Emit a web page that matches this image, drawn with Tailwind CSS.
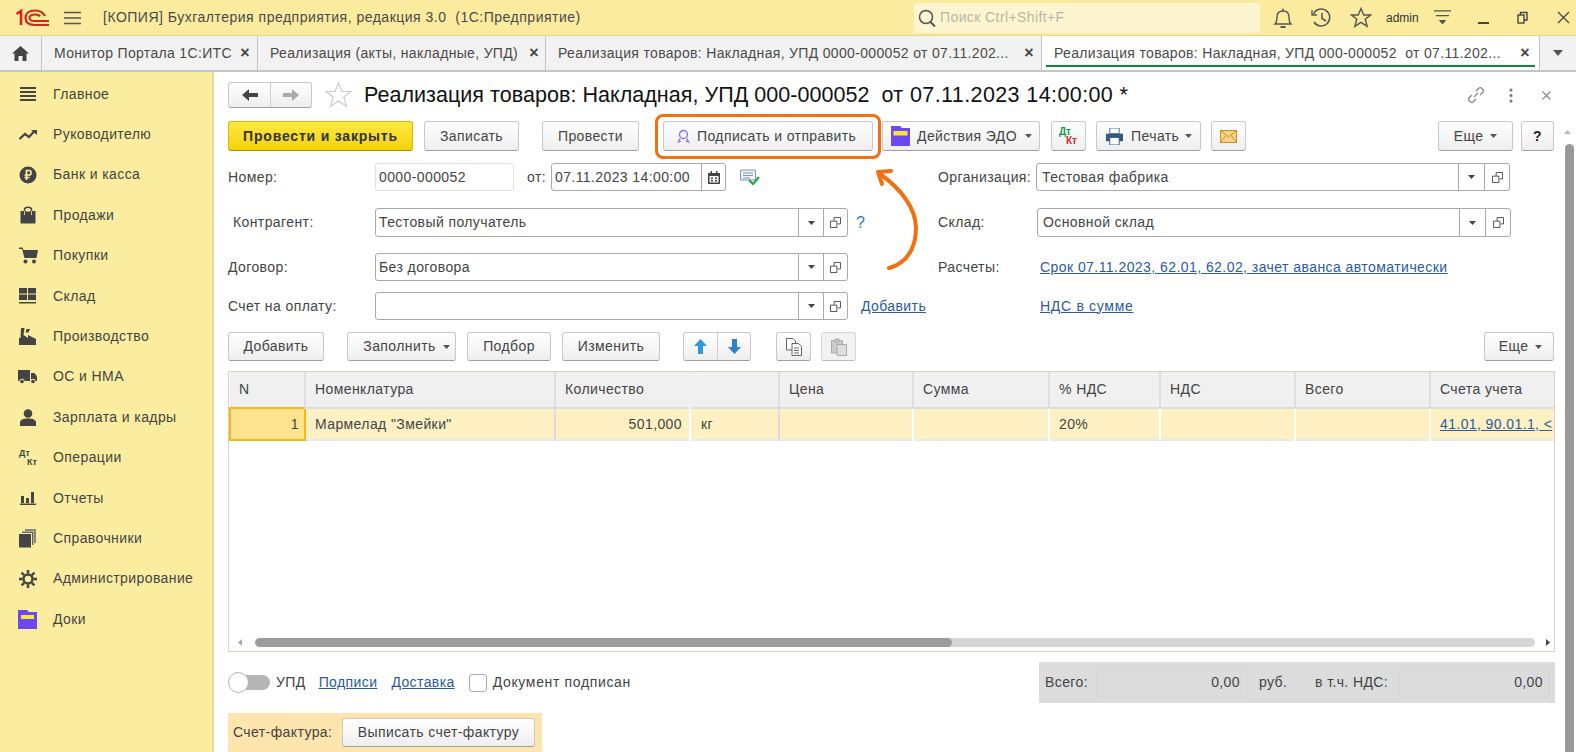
<!DOCTYPE html>
<html lang="ru">
<head>
    <meta charset="UTF-8">
    <title>Реализация товаров</title>
    <script src="https://cdn.jsdelivr.net/npm/@tailwindcss/browser@4"></script>
</head>
<body class="w-[1576px] h-[752px] overflow-hidden bg-white flex flex-col font-['Liberation_Sans',Arial,sans-serif] text-[14px] tracking-[0.4px] text-[#444]">

    <!-- title bar -->
    <header class="h-[36px] shrink-0 flex items-center bg-[#fbeb9f] border-b border-[#e2d68e]">
        <svg class="ml-[15px] w-[35px] h-[18px]" viewBox="0 0 35 18" fill="none" stroke="#d5261c">
            <path d="M1.5 5 L6 2 V16" stroke-width="2.6"/>
            <path d="M30 7 C28 3 24 1.5 20 1.5 C14 1.5 10.500 4.500 10.500 9 C10.500 13.500 14 16 20 16 H34" stroke-width="2.2"/>
            <path d="M25 7.500 C24 6 22 5.500 20 5.500 C16.500 5.500 14.500 7 14.500 9 C14.500 11 16.500 12 20 12 H34" stroke-width="2"/>
        </svg>
        <svg class="ml-[14px] w-[17px] h-[14px]" viewBox="0 0 17 14" stroke="#555" stroke-width="1.300"><path d="M0 1.500H17M0 7H17M0 12.500H17"/></svg>
        <div class="ml-[22px] w-[811px] tracking-[0.5px] text-[#4a4a4a]">[КОПИЯ] Бухгалтерия предприятия, редакция 3.0&nbsp; (1С:Предприятие)</div>
        <div class="w-[346px] h-[30px] rounded-[3px] bg-[#fdf5cf] flex items-center pl-[3px]">
            <svg class="w-[20px] h-[20px]" viewBox="0 0 20 20" fill="none" stroke="#555" stroke-width="1.500"><circle cx="9" cy="9" r="6.500"/><path d="M13.500 14L18 18.500" stroke-width="2"/></svg>
            <input class="ml-[3px] w-[300px] bg-transparent outline-none placeholder:text-[#b9b6a6]" placeholder="Поиск Ctrl+Shift+F">
        </div>
        <svg class="ml-[13px] w-[20px] h-[22px]" viewBox="0 0 20 22" fill="none" stroke="#555" stroke-width="1.400"><path d="M2 17 C4 15 4 12 4 10 C4 6 6.500 4 10 4 C13.500 4 16 6 16 10 C16 12 16 15 18 17 Z"/><path d="M10 1.500V4"/><path d="M7.500 20H12.500" stroke-width="2"/></svg>
        <svg class="ml-[18px] w-[21px] h-[22px]" viewBox="0 0 21 22" fill="none" stroke="#555" stroke-width="1.500"><path d="M2.500 7 A8.500 8.500 0 1 1 3 15"/><path d="M1 3V8H6" stroke-width="1.300"/><path d="M11 6V11.500L15 14"/></svg>
        <svg class="ml-[18px] w-[22px] h-[21px]" viewBox="0 0 22 21" fill="none" stroke="#555" stroke-width="1.400"><path d="M11 1.500L13.800 8H20.500L15.200 12.300L17.200 19.300L11 15.300L4.800 19.300L6.800 12.300L1.500 8H8.200Z"/></svg>
        <span class="ml-[14px] text-[12px] tracking-normal text-[#333]">admin</span>
        <svg class="ml-[15px] w-[17px] h-[18px]" viewBox="0 0 18 18" stroke="#555" stroke-width="1.400" fill="#555"><path d="M0 1.500H18M2 6.500H16"/><path d="M5 11H13L9 16Z" stroke="none"/></svg>
        <svg class="ml-[27px] w-[11px] h-[4px] mt-[10px]" viewBox="0 0 11 4" stroke="#444" stroke-width="2"><path d="M0 2H11"/></svg>
        <svg class="ml-[28px] w-[11px] h-[13px]" viewBox="0 0 11 13" fill="none" stroke="#444" stroke-width="1.400"><rect x="1" y="4" width="6" height="8"/><path d="M3.500 4V1.500H10V9H7"/></svg>
        <svg class="ml-[29px] w-[13px] h-[13px]" viewBox="0 0 13 13" stroke="#444" stroke-width="1.200"><path d="M1 1L12 12M12 1L1 12"/></svg>
    </header>

    <!-- open tabs -->
    <nav class="h-[36px] shrink-0 flex bg-[#f2f2f2] border-b-2 border-[#c4c4c4] text-[#4a4a4a] tracking-[0.33px]">
        <div class="w-[42px] flex items-center justify-center border-r border-[#c4c4c4]">
            <svg class="w-[17px] h-[15px]" viewBox="0 0 17 15" fill="#444"><path d="M8.500 0L0 7.500H2.500V15H6.500V10H10.500V15H14.500V7.500H17Z"/></svg>
        </div>
        <div class="w-[216px] pl-[12px] flex items-center justify-between pr-[7px] border-r border-[#c4c4c4]">
            <span>Монитор Портала 1С:ИТС</span><span class="text-[#444] text-[16px] font-bold leading-none">×</span>
        </div>
        <div class="w-[288px] pl-[12px] flex items-center justify-between pr-[6px] border-r border-[#c4c4c4]">
            <span>Реализация (акты, накладные, УПД)</span><span class="text-[#444] text-[16px] font-bold leading-none">×</span>
        </div>
        <div class="w-[496px] pl-[12px] flex items-center justify-between pr-[7px] border-r border-[#c4c4c4]">
            <span class="whitespace-pre">Реализация товаров: Накладная, УПД 0000-000052 от 07.11.202...</span><span class="text-[#444] text-[16px] font-bold leading-none">×</span>
        </div>
        <div class="w-[498px] relative bg-white pl-[12px] flex items-center justify-between pr-[9px] border-r border-[#c4c4c4]">
            <span class="whitespace-pre">Реализация товаров: Накладная, УПД 000-000052  от 07.11.202...</span><span class="text-[#444] text-[16px] font-bold leading-none">×</span>
            <div class="absolute left-[4px] right-[4px] bottom-[3px] h-[2px] bg-[#0b8a3e]"></div>
        </div>
        <div class="flex-1 flex items-center justify-center">
            <svg class="w-[10px] h-[6px]" viewBox="0 0 10 6" fill="#555"><path d="M0 0H10L5 6Z"/></svg>
        </div>
    </nav>

    <div class="flex-1 flex min-h-0">
        <!-- sections panel -->
        <aside class="w-[214px] shrink-0 bg-[#fbeda0] border-r-2 border-[#e6dca0] pt-[2px] text-[#444]">
            <a class="h-[40.400px] flex items-center">
                <svg class="ml-[19px] w-[18px] h-[16px]" viewBox="0 0 18 16" stroke="#444" stroke-width="1.800"><path d="M1 2H17M1 6H17M1 10H17M1 14H17"/></svg>
                <span class="ml-[16px]">Главное</span>
            </a>
            <a class="h-[40.400px] flex items-center">
                <svg class="ml-[19px] w-[18px] h-[16px]" viewBox="0 0 18 16" fill="none" stroke="#444" stroke-width="2.200"><path d="M0.500 12L6 7L10 10L15 4.500"/><path d="M12 3H18V8" stroke="none" fill="#444"/></svg>
                <span class="ml-[16px]">Руководителю</span>
            </a>
            <a class="h-[40.400px] flex items-center">
                <svg class="ml-[19px] w-[18px] h-[18px]" viewBox="0 0 18 18"><circle cx="9" cy="9" r="8.500" fill="#444"/><path d="M7.500 14V4.500H10.500C12.500 4.500 12.500 9 10.500 9H5.500M5.500 11.500H10.500" fill="none" stroke="#fbeda0" stroke-width="1.700"/></svg>
                <span class="ml-[16px]">Банк и касса</span>
            </a>
            <a class="h-[40.400px] flex items-center">
                <svg class="ml-[20px] w-[16px] h-[18px]" viewBox="0 0 16 18"><path d="M0.500 5H15.500V17.500H0.500Z" fill="#444"/><path d="M4.500 9V3.500C4.500 0.500 11.500 0.500 11.500 3.500V9" fill="none" stroke="#444" stroke-width="1.500"/><path d="M6 5.500V3.800C6 2.300 10 2.300 10 3.800V5.500Z" fill="#fbeda0"/><path d="M4.500 5V9M11.500 5V9" stroke="#fbeda0" stroke-width="0.800"/></svg>
                <span class="ml-[17px]">Продажи</span>
            </a>
            <a class="h-[40.400px] flex items-center">
                <svg class="ml-[19px] w-[19px] h-[17px]" viewBox="0 0 19 17" fill="#444"><path d="M0 0.500H3.500L4.500 3H19L17.500 11H5.500L3 2H0Z"/><circle cx="6.500" cy="14.500" r="2"/><circle cx="15" cy="14.500" r="2"/></svg>
                <span class="ml-[15px]">Покупки</span>
            </a>
            <a class="h-[40.400px] flex items-center">
                <svg class="ml-[19px] w-[17px] h-[16px]" viewBox="0 0 17 16" fill="#444"><path d="M0 0H8V5.500H0ZM9 0H17V5.500H9ZM0 6.500H8V12H0ZM9 6.500H17V12H9ZM0 14H17V15.500H0Z"/></svg>
                <span class="ml-[17px]">Склад</span>
            </a>
            <a class="h-[40.400px] flex items-center">
                <svg class="ml-[19px] w-[17px] h-[17px]" viewBox="0 0 17 17" fill="#444"><path d="M2 0H5.500L4.500 7L9 10V7L17 11V17H0V10H1.500Z"/><path d="M7.500 1H11L9.500 4.500H6.500Z"/></svg>
                <span class="ml-[17px]">Производство</span>
            </a>
            <a class="h-[40.400px] flex items-center">
                <svg class="ml-[18px] w-[19px] h-[15px]" viewBox="0 0 19 15" fill="#444"><path d="M0 1H12V12H0ZM13 4H16.500L19 7.500V12H13Z"/><circle cx="4" cy="12.500" r="2.300" stroke="#fbeda0"/><circle cx="15" cy="12.500" r="2.300" stroke="#fbeda0"/></svg>
                <span class="ml-[16px]">ОС и НМА</span>
            </a>
            <a class="h-[40.400px] flex items-center">
                <svg class="ml-[20px] w-[16px] h-[17px]" viewBox="0 0 16 17" fill="#444"><circle cx="8" cy="4.500" r="4.300"/><path d="M0 17V13.500C0 11 3 9.500 8 9.500C13 9.500 16 11 16 13.500V17Z"/></svg>
                <span class="ml-[17px]">Зарплата и кадры</span>
            </a>
            <a class="h-[40.400px] flex items-center">
                <span class="ml-[19px] w-[18px] h-[18px] relative block text-[9px] tracking-normal font-bold leading-none"><span class="absolute left-0 top-0">Дт</span><span class="absolute right-0 bottom-0">Кт</span></span>
                <span class="ml-[16px]">Операции</span>
            </a>
            <a class="h-[40.400px] flex items-center">
                <svg class="ml-[20px] w-[16px] h-[14px]" viewBox="0 0 16 14" fill="#444"><path d="M1 5H4V12H1ZM6 7H9V12H6ZM11 1H14V12H11ZM0 12.500H16V14H0Z"/></svg>
                <span class="ml-[17px]">Отчеты</span>
            </a>
            <a class="h-[40.400px] flex items-center">
                <svg class="ml-[19px] w-[17px] h-[19px]" viewBox="0 0 17 19"><path d="M6 0H17V14H15V2H6Z" fill="#8a8a7a"/><path d="M3 2.500H14.500V16H13V4H3Z" fill="#666"/><path d="M0 5H12V18.500H0Z" fill="#444"/></svg>
                <span class="ml-[17px]">Справочники</span>
            </a>
            <a class="h-[40.400px] flex items-center">
                <svg class="ml-[19px] w-[18px] h-[18px]" viewBox="0 0 18 18" fill="none" stroke="#444"><circle cx="9" cy="9" r="4.500" stroke-width="2.500"/><path d="M9 0V3.500M9 14.500V18M0 9H3.500M14.500 9H18M2.600 2.600L5.100 5.100M12.900 12.900L15.400 15.400M2.600 15.400L5.100 12.900M12.900 5.100L15.400 2.600" stroke-width="2.500"/></svg>
                <span class="ml-[16px]">Администрирование</span>
            </a>
            <a class="h-[40.400px] flex items-center">
                <svg class="ml-[18px] w-[19px] h-[19px]" viewBox="0 0 19 19"><path d="M0 0H9L11 2H19V19H0Z" fill="#6b48f0"/><path d="M3 5H16V9H3Z" fill="#fde23a"/></svg>
                <span class="ml-[16px]">Доки</span>
            </a>
        </aside>

        <!-- document form -->
        <main class="flex-1 min-w-0 pl-[14px] flex flex-col">
            <div class="mt-[10px] h-[26px] flex items-center shrink-0">
                <div class="w-[84px] h-full flex rounded-[3px] border border-[#c8c8c8] border-b-[#a0a0a0] bg-linear-to-b from-white to-[#eeeeee]">
                    <div class="w-[42px] border-r border-[#d0d0d0] flex items-center justify-center">
                        <svg class="w-[16px] h-[12px]" viewBox="0 0 16 12" fill="#444"><path d="M0 6L7 0V4H16V8H7V12Z"/></svg>
                    </div>
                    <div class="flex-1 flex items-center justify-center">
                        <svg class="w-[16px] h-[12px]" viewBox="0 0 16 12" fill="#aaa"><path d="M16 6L9 0V4H0V8H9V12Z"/></svg>
                    </div>
                </div>
                <svg class="ml-[13px] w-[27px] h-[26px]" viewBox="0 0 27 26" fill="none" stroke="#ccc" stroke-width="1.200"><path d="M13.500 1L17 9.500H26L18.800 15L21.500 24.500L13.500 19L5.500 24.500L8.200 15L1 9.500H10Z"/></svg>
                <h1 class="ml-[12px] text-[21.500px] tracking-[0.04px] text-[#111] whitespace-pre">Реализация товаров: Накладная, УПД 000-000052  <span class="tracking-[0.4px]">от 07.11.2023 14:00:00 *</span></h1>
                <div class="ml-auto flex items-center mr-[4px]">
                    <svg class="w-[20px] h-[20px]" viewBox="0 0 20 20" fill="none" stroke="#888" stroke-width="1.300"><path d="M8 12L12 8"/><path d="M10 6L13 3C15 1.500 18.500 5 17 7L14 10"/><path d="M10 14L7 17C5 18.500 1.500 15 3 13L6 10"/></svg>
                    <svg class="ml-[23px] w-[4px] h-[15px]" viewBox="0 0 4 15" fill="#777"><circle cx="2" cy="2" r="1.500"/><circle cx="2" cy="7.500" r="1.500"/><circle cx="2" cy="13" r="1.500"/></svg>
                    <svg class="ml-[29px] w-[9px] h-[9px]" viewBox="0 0 9 9" stroke="#888" stroke-width="1.100"><path d="M0.500 0.500L8.500 8.500M8.500 0.500L0.500 8.500"/></svg>
                </div>
            </div>

            <div class="mt-[13px] h-[30px] flex shrink-0">
                <button class="w-[185px] rounded-[3px] border border-[#d8b800] border-b-[#a89000] bg-linear-to-b from-[#ffe93c] to-[#f3d200] font-bold tracking-[0.8px] text-[#333]">Провести и закрыть</button>
                <button class="ml-[11px] w-[95px] rounded-[3px] border border-[#c8c8c8] border-b-[#a0a0a0] bg-linear-to-b from-white to-[#eeeeee]">Записать</button>
                <button class="ml-[23px] w-[97px] rounded-[3px] border border-[#c8c8c8] border-b-[#a0a0a0] bg-linear-to-b from-white to-[#eeeeee]">Провести</button>
                <button class="relative ml-[24px] w-[210px] rounded-[3px] border border-[#c8c8c8] border-b-[#a0a0a0] bg-linear-to-b from-white to-[#eeeeee] flex items-center pl-[13px]">
                    <svg class="w-[13px] h-[14px]" viewBox="0 0 13 14" fill="none" stroke="#8470f0" stroke-width="1.300"><circle cx="6.500" cy="5.500" r="4"/><path d="M3 9.500L1.500 13L4 12M10 9.500L11.500 13L9 12"/></svg>
                    <span class="ml-[7px]">Подписать и отправить</span>
                    <span class="absolute left-[-9px] right-[-9px] top-[-8px] bottom-[-9px] rounded-[8px] border-[3px] border-[#f2700f]"></span>
                </button>
                <button class="ml-[9px] w-[158px] rounded-[3px] border border-[#c8c8c8] border-b-[#a0a0a0] bg-linear-to-b from-white to-[#eeeeee] flex items-center pl-[8px]">
                    <svg class="w-[19px] h-[20px]" viewBox="0 0 19 20"><path d="M0 0H9L11 2H19V20H0Z" fill="#6b48f0"/><path d="M2.500 5H16.500V9.500H2.500Z" fill="#fde23a"/></svg>
                    <span class="ml-[7px]">Действия ЭДО</span>
                    <svg class="ml-[8px] w-[7px] h-[4px]" viewBox="0 0 7 4" fill="#555"><path d="M0 0H7L3.500 4Z"/></svg>
                </button>
                <button class="relative ml-[11px] w-[35px] rounded-[3px] border border-[#c8c8c8] border-b-[#a0a0a0] bg-linear-to-b from-white to-[#eeeeee] font-bold text-[10px] tracking-normal leading-none">
                    <span class="absolute left-[7px] top-[5px] text-[#0d9a4a]">Дт</span>
                    <span class="absolute left-[14px] top-[14px] text-[#e02a2a]">Кт</span>
                </button>
                <button class="ml-[10px] w-[105px] rounded-[3px] border border-[#c8c8c8] border-b-[#a0a0a0] bg-linear-to-b from-white to-[#eeeeee] flex items-center pl-[9px]">
                    <svg class="w-[17px] h-[17px]" viewBox="0 0 18 18"><path d="M4 0H14V6H4Z" fill="#fff" stroke="#4d6f8f"/><path d="M0 6H18V14H0Z" fill="#345a7c"/><path d="M4 10H14V18H4Z" fill="#fff" stroke="#345a7c"/></svg>
                    <span class="ml-[8px]">Печать</span>
                    <svg class="ml-[6px] w-[7px] h-[4px]" viewBox="0 0 7 4" fill="#555"><path d="M0 0H7L3.500 4Z"/></svg>
                </button>
                <button class="ml-[10px] w-[35px] rounded-[3px] border border-[#c8c8c8] border-b-[#a0a0a0] bg-linear-to-b from-white to-[#eeeeee] flex items-center justify-center">
                    <svg class="w-[17px] h-[13px]" viewBox="0 0 17 13" fill="#f8d58a" stroke="#d58a22"><rect x="0.500" y="0.500" width="16" height="12"/><path d="M0.500 0.500L8.500 7L16.500 0.500M0.500 12.500L6 5.500M16.500 12.500L11 5.500" fill="none"/></svg>
                </button>
                <button class="ml-auto w-[75px] rounded-[3px] border border-[#c8c8c8] border-b-[#a0a0a0] bg-linear-to-b from-white to-[#eeeeee] flex items-center justify-center">
                    Еще<svg class="ml-[7px] w-[7px] h-[4px]" viewBox="0 0 7 4" fill="#555"><path d="M0 0H7L3.500 4Z"/></svg>
                </button>
                <button class="ml-[8px] mr-[1px] w-[33px] rounded-[3px] border border-[#c8c8c8] border-b-[#a0a0a0] bg-linear-to-b from-white to-[#eeeeee] font-bold text-[#222]">?</button>
            </div>

            <!-- requisites -->
            <div class="mt-[12px] h-[28px] flex items-center shrink-0">
                <label class="w-[147px]">Номер:</label>
                <input class="w-[139px] h-full px-[3px] rounded-[3px] border border-[#e0e0e0] outline-none" value="0000-000052">
                <span class="ml-[13px] w-[24px]">от:</span>
                <div class="w-[175px] h-full flex rounded-[3px] border border-[#aaa]">
                    <input class="w-[149px] px-[3px] outline-none" value="07.11.2023 14:00:00">
                    <div class="flex-1 border-l border-[#aaa] flex items-center justify-center">
                        <svg class="w-[12px] h-[13px]" viewBox="0 0 12 13" fill="#444"><path d="M0 2H2.500V0H4V2H8V0H9.500V2H12V13H0ZM1.500 5V11.500H10.500V5Z"/><path d="M3 6.500H5V8H3ZM7 6.500H9V8H7ZM3 9H5V10.500H3ZM7 9H9V10.500H7Z"/></svg>
                    </div>
                </div>
                <svg class="ml-[14px] w-[20px] h-[16px]" viewBox="0 0 20 16"><path d="M0.500 1H15.500V11H0.500Z" fill="#eef2f5" stroke="#7f99ad"/><path d="M3 4H13M3 6.500H13M3 9H10" stroke="#7f99ad"/><path d="M9 11L13 15L19 8" fill="none" stroke="#28a745" stroke-width="2.200"/></svg>
                <label class="ml-[178px] w-[98px]">Организация:</label>
                <div class="w-[474px] h-full flex rounded-[3px] border border-[#aaa]">
                    <input class="flex-1 min-w-0 pl-[5px] outline-none" value="Тестовая фабрика">
                    <div class="w-[26px] border-l border-[#aaa] flex items-center justify-center"><svg class="w-[7px] h-[4px]" viewBox="0 0 7 4" fill="#444"><path d="M0 0H7L3.500 4Z"/></svg></div>
                    <div class="w-[25px] border-l border-[#aaa] flex items-center justify-center"><svg class="w-[11px] h-[11px]" viewBox="0 0 12 12" fill="none" stroke="#444"><path d="M4.500 4V0.500H11.500V7.500H8.500M0.500 4.500H7.500V11.500H0.500Z"/></svg></div>
                </div>
            </div>

            <div class="mt-[17px] h-[29px] flex items-center shrink-0">
                <label class="w-[147px] pl-[5px]">Контрагент:</label>
                <div class="w-[473px] h-full flex rounded-[3px] border border-[#aaa]">
                    <input class="flex-1 min-w-0 px-[3px] outline-none" value="Тестовый получатель">
                    <div class="w-[25px] border-l border-[#aaa] flex items-center justify-center"><svg class="w-[7px] h-[4px]" viewBox="0 0 7 4" fill="#444"><path d="M0 0H7L3.500 4Z"/></svg></div>
                    <div class="w-[24px] border-l border-[#aaa] flex items-center justify-center"><svg class="w-[11px] h-[11px]" viewBox="0 0 12 12" fill="none" stroke="#444"><path d="M4.500 4V0.500H11.500V7.500H8.500M0.500 4.500H7.500V11.500H0.500Z"/></svg></div>
                </div>
                <a class="ml-[8px] w-[82px] text-[16px] text-[#2a7ab5]">?</a>
                <label class="w-[99px]">Склад:</label>
                <div class="w-[474px] h-full flex rounded-[3px] border border-[#aaa]">
                    <input class="flex-1 min-w-0 pl-[5px] outline-none" value="Основной склад">
                    <div class="w-[26px] border-l border-[#aaa] flex items-center justify-center"><svg class="w-[7px] h-[4px]" viewBox="0 0 7 4" fill="#444"><path d="M0 0H7L3.500 4Z"/></svg></div>
                    <div class="w-[25px] border-l border-[#aaa] flex items-center justify-center"><svg class="w-[11px] h-[11px]" viewBox="0 0 12 12" fill="none" stroke="#444"><path d="M4.500 4V0.500H11.500V7.500H8.500M0.500 4.500H7.500V11.500H0.500Z"/></svg></div>
                </div>
            </div>

            <div class="mt-[16px] h-[28px] flex items-center shrink-0">
                <label class="w-[147px]">Договор:</label>
                <div class="w-[473px] h-full flex rounded-[3px] border border-[#aaa]">
                    <input class="flex-1 min-w-0 px-[3px] outline-none" value="Без договора">
                    <div class="w-[25px] border-l border-[#aaa] flex items-center justify-center"><svg class="w-[7px] h-[4px]" viewBox="0 0 7 4" fill="#444"><path d="M0 0H7L3.500 4Z"/></svg></div>
                    <div class="w-[24px] border-l border-[#aaa] flex items-center justify-center"><svg class="w-[11px] h-[11px]" viewBox="0 0 12 12" fill="none" stroke="#444"><path d="M4.500 4V0.500H11.500V7.500H8.500M0.500 4.500H7.500V11.500H0.500Z"/></svg></div>
                </div>
                <label class="ml-[90px] w-[102px]">Расчеты:</label>
                <a class="text-[#2b5aa5] tracking-[0.44px] underline">Срок 07.11.2023, 62.01, 62.02, зачет аванса автоматически</a>
            </div>

            <div class="mt-[11px] h-[28px] flex items-center shrink-0">
                <label class="w-[147px]">Счет на оплату:</label>
                <div class="w-[473px] h-full flex rounded-[3px] border border-[#aaa]">
                    <input class="flex-1 min-w-0 px-[3px] outline-none" value="">
                    <div class="w-[25px] border-l border-[#aaa] flex items-center justify-center"><svg class="w-[7px] h-[4px]" viewBox="0 0 7 4" fill="#444"><path d="M0 0H7L3.500 4Z"/></svg></div>
                    <div class="w-[24px] border-l border-[#aaa] flex items-center justify-center"><svg class="w-[11px] h-[11px]" viewBox="0 0 12 12" fill="none" stroke="#444"><path d="M4.500 4V0.500H11.500V7.500H8.500M0.500 4.500H7.500V11.500H0.500Z"/></svg></div>
                </div>
                <a class="ml-[13px] w-[179px] text-[#2b5aa5] underline">Добавить</a>
                <a class="text-[#2b5aa5] tracking-[0.7px] underline">НДС в сумме</a>
            </div>

            <!-- table commands -->
            <div class="mt-[12px] h-[29px] flex shrink-0">
                <button class="w-[96px] rounded-[3px] border border-[#c8c8c8] border-b-[#a0a0a0] bg-linear-to-b from-white to-[#eeeeee]">Добавить</button>
                <button class="ml-[23px] w-[109px] rounded-[3px] border border-[#c8c8c8] border-b-[#a0a0a0] bg-linear-to-b from-white to-[#eeeeee] flex items-center justify-center pl-[10px]">
                    Заполнить<svg class="ml-[7px] w-[7px] h-[4px]" viewBox="0 0 7 4" fill="#555"><path d="M0 0H7L3.500 4Z"/></svg>
                </button>
                <button class="ml-[11px] w-[84px] rounded-[3px] border border-[#c8c8c8] border-b-[#a0a0a0] bg-linear-to-b from-white to-[#eeeeee]">Подбор</button>
                <button class="ml-[11px] w-[98px] rounded-[3px] border border-[#c8c8c8] border-b-[#a0a0a0] bg-linear-to-b from-white to-[#eeeeee]">Изменить</button>
                <div class="ml-[23px] w-[68px] flex rounded-[3px] border border-[#c8c8c8] border-b-[#a0a0a0] bg-linear-to-b from-white to-[#eeeeee]">
                    <div class="w-[34px] border-r border-[#d0d0d0] flex items-center justify-center">
                        <svg class="w-[13px] h-[15px]" viewBox="0 0 13 15" fill="#2d9be0"><path d="M6.500 0L13 7H9V15H4V7H0Z"/></svg>
                    </div>
                    <div class="flex-1 flex items-center justify-center">
                        <svg class="w-[13px] h-[15px]" viewBox="0 0 13 15" fill="#2a85cc"><path d="M6.500 15L13 8H9V0H4V8H0Z"/></svg>
                    </div>
                </div>
                <button class="ml-[25px] w-[35px] rounded-[3px] border border-[#c8c8c8] border-b-[#a0a0a0] bg-linear-to-b from-white to-[#eeeeee] flex items-center justify-center">
                    <svg class="w-[16px] h-[18px]" viewBox="0 0 16 18" fill="#fff" stroke="#666"><path d="M0.500 0.500H7L9.500 3V12H0.500Z"/><path d="M6 5.500H12.500L15.500 8.500V17.500H6Z"/><path d="M8 10H13M8 12.500H13M8 15H13" fill="none"/></svg>
                </button>
                <button class="ml-[10px] w-[35px] rounded-[3px] border border-[#d8d8d8] border-b-[#bbb] bg-[#f2f2f2] flex items-center justify-center">
                    <svg class="w-[16px] h-[18px]" viewBox="0 0 16 18" fill="#ccc" stroke="#aaa"><path d="M0.500 2.500H11.500V15H0.500Z"/><path d="M4 1H8V4H4Z"/><path d="M6 6.500H15.500V17.500H6Z" fill="#ddd"/></svg>
                </button>
                <button class="ml-auto mr-[1px] w-[70px] rounded-[3px] border border-[#c8c8c8] border-b-[#a0a0a0] bg-linear-to-b from-white to-[#eeeeee] flex items-center justify-center pl-[3px]">
                    Еще<svg class="ml-[7px] w-[7px] h-[4px]" viewBox="0 0 7 4" fill="#555"><path d="M0 0H7L3.500 4Z"/></svg>
                </button>
            </div>

            <!-- goods table -->
            <div class="mt-[10px] h-[281px] shrink-0 border border-[#d9d4bf] flex flex-col overflow-hidden">
                <table class="table-fixed w-[1325px] border-collapse">
                    <colgroup>
                        <col class="w-[75px]"><col class="w-[250px]"><col class="w-[135px]"><col class="w-[89px]"><col class="w-[134px]"><col class="w-[136px]"><col class="w-[111px]"><col class="w-[135px]"><col class="w-[135px]"><col class="w-[125px]">
                    </colgroup>
                    <thead>
                        <tr class="h-[36px] bg-[#f0f0f0] text-left font-normal border-b-2 border-[#dedede]">
                            <th class="font-normal pl-[9px] border-r-2 border-[#dedede]">N</th>
                            <th class="font-normal pl-[9px] border-r-2 border-[#dedede]">Номенклатура</th>
                            <th colspan="2" class="font-normal pl-[9px] border-r-2 border-[#dedede]">Количество</th>
                            <th class="font-normal pl-[9px] border-r-2 border-[#dedede]">Цена</th>
                            <th class="font-normal pl-[9px] border-r-2 border-[#dedede]">Сумма</th>
                            <th class="font-normal pl-[9px] border-r-2 border-[#dedede]">% НДС</th>
                            <th class="font-normal pl-[9px] border-r-2 border-[#dedede]">НДС</th>
                            <th class="font-normal pl-[9px] border-r-2 border-[#dedede]">Всего</th>
                            <th class="font-normal pl-[9px]">Счета учета</th>
                        </tr>
                    </thead>
                    <tbody>
                        <tr class="h-[32px] bg-[#fdf1c4] border-b-2 border-[#e8e8e8]">
                            <td class="bg-[#fde28f] border-2 border-[#f6bb13] text-right pr-[5px]">1</td>
                            <td class="pl-[9px] border-r-2 border-[#dcdcdc]">Мармелад "Змейки"</td>
                            <td class="text-right pr-[7px] border-r-2 border-white">501,000</td>
                            <td class="pl-[10px] border-r-2 border-[#dcdcdc]">кг</td>
                            <td class="border-r-2 border-white"></td>
                            <td class="border-r-2 border-white"></td>
                            <td class="pl-[9px] border-r-2 border-white">20%</td>
                            <td class="border-r-2 border-white"></td>
                            <td class="border-r-2 border-white"></td>
                            <td class="pl-[9px] whitespace-nowrap"><a class="text-[#2b5aa5] underline">41.01, 90.01.1, &lt;</a></td>
                        </tr>
                    </tbody>
                </table>
                <div class="flex-1"></div>
                <div class="h-[9px] mb-[4px] flex items-center text-[#888]">
                    <svg class="ml-[9px] w-[4px] h-[7px]" viewBox="0 0 4 7" fill="#aaa"><path d="M4 0V7L0 3.500Z"/></svg>
                    <div class="ml-[13px] w-[1280px] h-full flex rounded-full bg-[#d6d6d6] overflow-hidden">
                        <div class="w-[697px] h-full rounded-full bg-[#9c9c9c]"></div>
                    </div>
                    <svg class="ml-[11px] w-[4px] h-[7px]" viewBox="0 0 4 7" fill="#444"><path d="M0 0V7L4 3.500Z"/></svg>
                </div>
            </div>

            <div class="mt-[10px] h-[41px] flex shrink-0">
                <div class="flex items-center">
                    <span class="relative w-[42px] h-[21px] block">
                        <span class="absolute left-[10px] right-0 top-[3px] bottom-[3px] rounded-r-full bg-[#b5b5b5]"></span>
                        <span class="absolute left-0 top-0 w-[21px] h-[21px] rounded-full bg-white border border-[#b0b0b0]"></span>
                    </span>
                    <span class="ml-[6px]">УПД</span>
                    <a class="ml-[13px] text-[#2b5aa5] underline">Подписи</a>
                    <a class="ml-[14px] text-[#2b5aa5] underline">Доставка</a>
                    <input type="checkbox" class="ml-[14px] appearance-none w-[18px] h-[18px] rounded-[3px] border border-[#aaa] bg-white">
                    <span class="ml-[6px] tracking-[0.65px]">Документ подписан</span>
                </div>
                <div class="ml-auto w-[516px] bg-[#dcdcdc] flex items-center pl-[6px]">
                    <span class="w-[51px]">Всего:</span>
                    <div class="w-[151px] h-[29px] rounded-[3px] border border-[#d6d6d6] text-right pr-[6px] leading-[27px]">0,00</div>
                    <span class="ml-[12px] w-[56px]">руб.</span>
                    <span class="w-[84px]">в т.ч. НДС:</span>
                    <div class="w-[151px] h-[29px] rounded-[3px] border border-[#d6d6d6] text-right pr-[6px] leading-[27px]">0,00</div>
                </div>
            </div>

            <div class="mt-[10px] h-[39px] w-[314px] shrink-0 bg-[#fde5ad] flex items-center pl-[5px]">
                <span class="w-[109px]">Счет-фактура:</span>
                <button class="w-[193px] h-[29px] rounded-[3px] border border-[#c8c8c8] border-b-[#a0a0a0] bg-linear-to-b from-white to-[#eeeeee]">Выписать счет-фактуру</button>
            </div>
        </main>

        <!-- form scrollbar -->
        <div class="w-[21px] shrink-0 flex flex-col items-end pr-[2px] pt-[58px]">
            <svg class="mr-[3px] w-[7px] h-[4px]" viewBox="0 0 7 4" fill="#bbb"><path d="M0 4H7L3.500 0Z"/></svg>
            <div class="mt-[10px] w-[9px] flex-1 rounded-t-full bg-[#999]"></div>
        </div>
    </div>

    <!-- hint arrow drawn over the form -->
    <svg class="absolute left-[870px] top-[160px] w-[60px] h-[115px] pointer-events-none" viewBox="0 0 60 115" fill="none" stroke="#f2700f" stroke-width="4" stroke-linecap="round" stroke-linejoin="round">
        <path d="M19 108 C42 102 46 80 46 68 C46 48 30 28 10 14"/>
        <path d="M21 11 L8 12 L12 24"/>
    </svg>
</body>
</html>
